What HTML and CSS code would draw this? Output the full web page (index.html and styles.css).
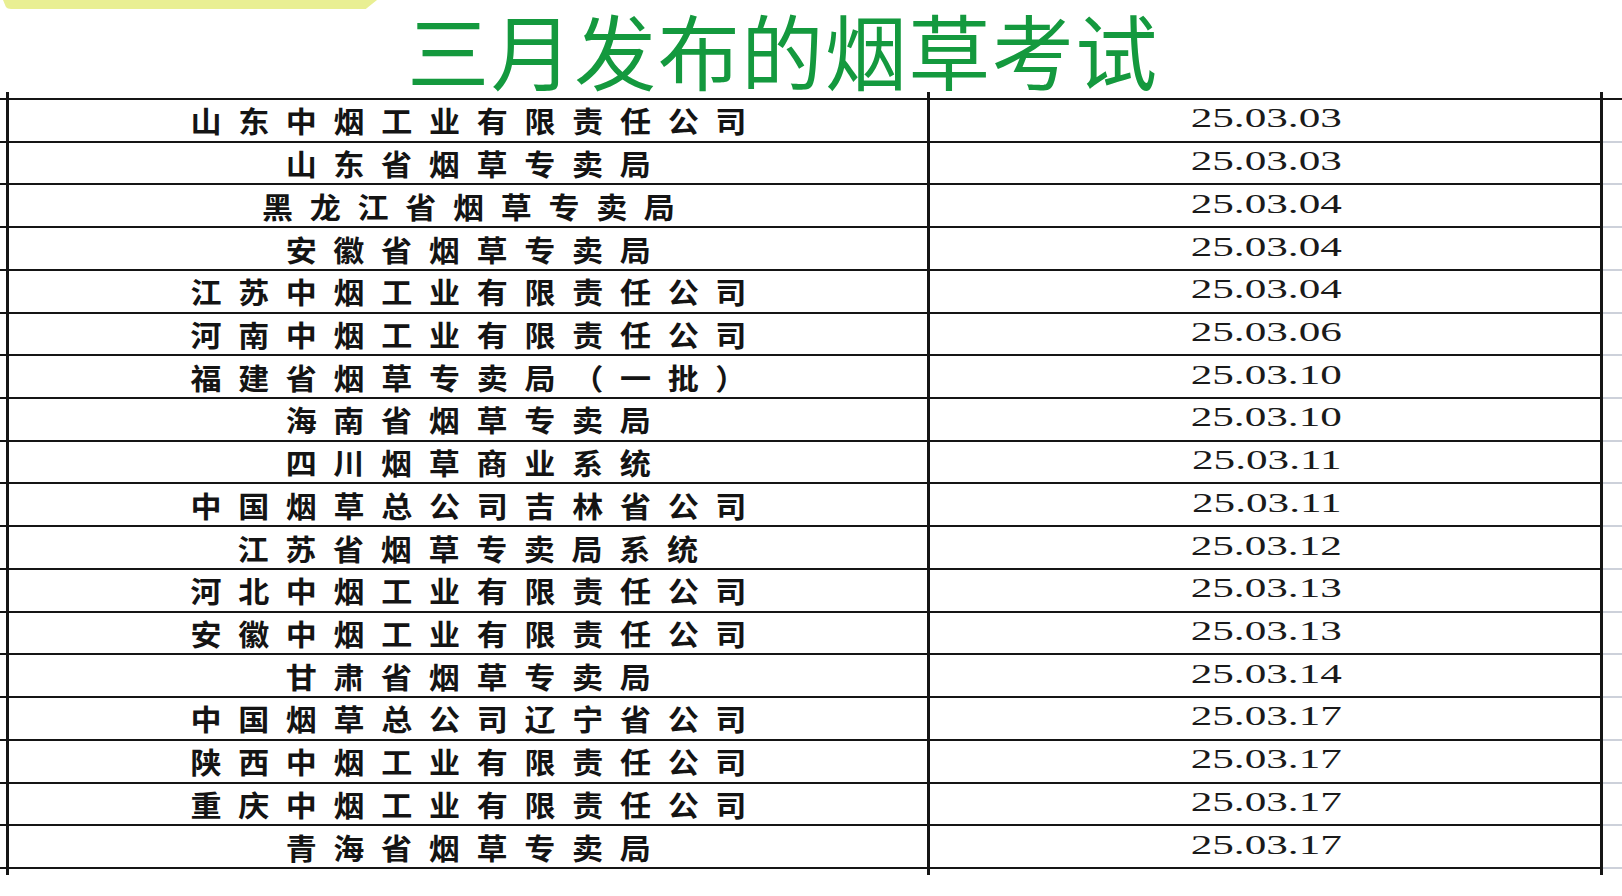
FILE: index.html
```html
<!DOCTYPE html>
<html lang="zh-CN">
<head>
<meta charset="utf-8">
<title>三月发布的烟草考试</title>
<link rel="stylesheet" href="styles.css">
</head>
<body>
<header class="head">
  <div class="bar"></div>
  <h1 class="title">三月发布的烟草考试</h1>
</header>
<section class="sheet">
  <div class="grid">
    <div class="c name"><span>山东中烟工业有限责任公司</span></div><div class="c date"><span>25.03.03</span></div><div class="c ext"></div>
    <div class="c name"><span>山东省烟草专卖局</span></div><div class="c date"><span>25.03.03</span></div><div class="c ext"></div>
    <div class="c name"><span>黑龙江省烟草专卖局</span></div><div class="c date"><span>25.03.04</span></div><div class="c ext"></div>
    <div class="c name"><span>安徽省烟草专卖局</span></div><div class="c date"><span>25.03.04</span></div><div class="c ext"></div>
    <div class="c name"><span>江苏中烟工业有限责任公司</span></div><div class="c date"><span>25.03.04</span></div><div class="c ext"></div>
    <div class="c name"><span>河南中烟工业有限责任公司</span></div><div class="c date"><span>25.03.06</span></div><div class="c ext"></div>
    <div class="c name"><span>福建省烟草专卖局（一批）</span></div><div class="c date"><span>25.03.10</span></div><div class="c ext"></div>
    <div class="c name"><span>海南省烟草专卖局</span></div><div class="c date"><span>25.03.10</span></div><div class="c ext"></div>
    <div class="c name"><span>四川烟草商业系统</span></div><div class="c date"><span>25.03.11</span></div><div class="c ext"></div>
    <div class="c name"><span>中国烟草总公司吉林省公司</span></div><div class="c date"><span>25.03.11</span></div><div class="c ext"></div>
    <div class="c name"><span>江苏省烟草专卖局系统</span></div><div class="c date"><span>25.03.12</span></div><div class="c ext"></div>
    <div class="c name"><span>河北中烟工业有限责任公司</span></div><div class="c date"><span>25.03.13</span></div><div class="c ext"></div>
    <div class="c name"><span>安徽中烟工业有限责任公司</span></div><div class="c date"><span>25.03.13</span></div><div class="c ext"></div>
    <div class="c name"><span>甘肃省烟草专卖局</span></div><div class="c date"><span>25.03.14</span></div><div class="c ext"></div>
    <div class="c name"><span>中国烟草总公司辽宁省公司</span></div><div class="c date"><span>25.03.17</span></div><div class="c ext"></div>
    <div class="c name"><span>陕西中烟工业有限责任公司</span></div><div class="c date"><span>25.03.17</span></div><div class="c ext"></div>
    <div class="c name"><span>重庆中烟工业有限责任公司</span></div><div class="c date"><span>25.03.17</span></div><div class="c ext"></div>
    <div class="c name"><span>青海省烟草专卖局</span></div><div class="c date"><span>25.03.17</span></div><div class="c ext"></div>
  </div>
</section>
</body>
</html>
```
FILE: styles.css
```css
html, body {
  margin: 0;
  padding: 0;
  background: #ffffff;
}
body {
  width: 1622px;
  height: 896px;
  overflow: hidden;
  font-family: "Noto Sans CJK SC", "Noto Sans", sans-serif;
  color: #141414;
}

.head {
  display: grid;
  height: 92px;
}
.bar {
  grid-area: 1 / 1;
  justify-self: start;
  align-self: start;
  width: 374px;
  height: 9px;
  margin-left: 3px;
  background: #e9ef93;
  border-radius: 0 0 4px 8px;
  clip-path: polygon(0 0, 100% 0, 97% 100%, 1% 100%);
}
.title {
  grid-area: 1 / 1;
  align-self: start;
  margin: 18.8px 0 0 0;
  padding-right: 56px;
  text-align: center;
  font-family: "Liberation Sans", "Noto Sans CJK SC", sans-serif;
  font-size: 82px;
  line-height: 73px;
  font-weight: 400;
  letter-spacing: 1.5px;
  color: #14993e;
}

.sheet {
  padding: 6px 0 6px 0;
  background:
    linear-gradient(to right,
      transparent 6px, #151515 6px, #151515 9px, transparent 9px,
      transparent 927px, #151515 927px, #151515 930px, transparent 930px,
      transparent 1600px, #151515 1600px, #151515 1603px, transparent 1603px);
}
.grid {
  display: grid;
  grid-template-columns: 927px 676px 1fr;
  grid-auto-rows: 42.72px;
  border-top: 2px solid #151515;
}
.c {
  display: flex;
  align-items: center;
  justify-content: center;
  border-bottom: 2px solid #151515;
  box-sizing: border-box;
}
.ext {
  border-bottom: 2px solid #cdd1da;
}
.name {
  padding-top: 1px;
  padding-left: 9px;
}
.name span {
  display: inline-block;
  font-size: 29px;
  line-height: 1;
  font-weight: 700;
  letter-spacing: 15.6px;
  padding-left: 15.6px;
  transform: scaleX(1.07);
  white-space: nowrap;
}
.date {
  padding-left: 3px;
  padding-bottom: 3px;
}
.date span {
  display: inline-block;
  font-family: "Liberation Serif", "Times New Roman", serif;
  font-size: 27px;
  line-height: 1;
  transform: scaleX(1.6);
  color: #1a1a1a;
}
```
